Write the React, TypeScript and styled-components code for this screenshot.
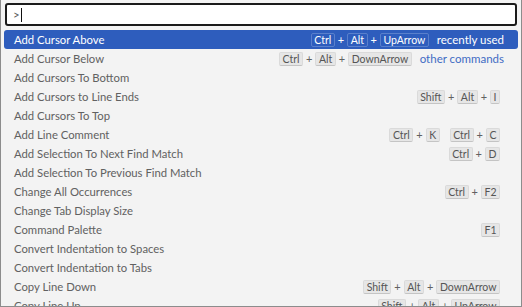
import React from "react";
import styled, { createGlobalStyle } from "styled-components";

const GlobalStyle = createGlobalStyle`
  html, body {
    margin: 0;
    padding: 0;
    background: #f3f3f3;
  }
  * {
    box-sizing: border-box;
  }
`;

type Chord = string[];

interface Command {
  label: string;
  keys?: Chord[];
  hint?: string;
}

const commands: Command[] = [
  { label: "Add Cursor Above", keys: [["Ctrl", "Alt", "UpArrow"]], hint: "recently used" },
  { label: "Add Cursor Below", keys: [["Ctrl", "Alt", "DownArrow"]], hint: "other commands" },
  { label: "Add Cursors To Bottom" },
  { label: "Add Cursors to Line Ends", keys: [["Shift", "Alt", "I"]] },
  { label: "Add Cursors To Top" },
  { label: "Add Line Comment", keys: [["Ctrl", "K"], ["Ctrl", "C"]] },
  { label: "Add Selection To Next Find Match", keys: [["Ctrl", "D"]] },
  { label: "Add Selection To Previous Find Match" },
  { label: "Change All Occurrences", keys: [["Ctrl", "F2"]] },
  { label: "Change Tab Display Size" },
  { label: "Command Palette", keys: [["F1"]] },
  { label: "Convert Indentation to Spaces" },
  { label: "Convert Indentation to Tabs" },
  { label: "Copy Line Down", keys: [["Shift", "Alt", "DownArrow"]] },
  { label: "Copy Line Up", keys: [["Shift", "Alt", "UpArrow"]] },
];

const Frame = styled.div`
  width: 522px;
  height: 307px;
  overflow: hidden;
  background: #f3f3f3;
  border-left: 1px solid #8c8c8c;
  border-right: 1px solid #8c8c8c;
  border-bottom: 1px solid #8c8c8c;
  font-family: Lato, "Open Sans", sans-serif;
  display: flex;
  flex-direction: column;
  padding: 3px 3px 0 3px;
`;

const InputBox = styled.div`
  flex: none;
  height: 23px;
  margin: 0 1px 4px 1px;
  border: 2px solid #1b1b1b;
  border-radius: 3px;
  background: #ffffff;
  display: flex;
  align-items: center;
  padding-left: 6px;
  font-size: 11.5px;
  color: #5a5a5a;
`;

const Caret = styled.span`
  display: inline-block;
  width: 1px;
  height: 14px;
  background: #111;
  margin-left: 1px;
`;

const List = styled.div`
  flex: none;
  display: flex;
  flex-direction: column;
`;

const Row = styled.div<{ $active?: boolean }>`
  height: 19px;
  flex: none;
  display: flex;
  align-items: center;
  padding: 0 14px 0 10px;
  border-radius: 3px;
  font-size: 11.3px;
  color: ${(p) => (p.$active ? "#ffffff" : "#616161")};
  background: ${(p) => (p.$active ? "#2e5dbd" : "transparent")};
`;

const Label = styled.span`
  flex: 1;
  white-space: nowrap;
`;

const Keys = styled.div<{ $tail?: boolean }>`
  display: flex;
  align-items: center;
  gap: 10px;
  margin-right: ${(p) => (p.$tail ? "4px" : "0")};
`;

const ChordGroup = styled.div`
  display: flex;
  align-items: center;
  gap: 3px;
`;

const Keycap = styled.span<{ $active?: boolean }>`
  display: inline-flex;
  align-items: center;
  height: 14px;
  padding: 0 2.5px;
  font-size: 10.5px;
  border-radius: 2px;
  color: ${(p) => (p.$active ? "#ffffff" : "#555555")};
  background: ${(p) => (p.$active ? "#2e5dbd" : "#e6e6e6")};
  border: 1px solid ${(p) => (p.$active ? "#5a80cc" : "#dadada")};
  border-bottom-color: ${(p) => (p.$active ? "#5a80cc" : "#c4c4c4")};
`;

const Plus = styled.span<{ $active?: boolean }>`
  font-size: 11px;
  color: ${(p) => (p.$active ? "#ffffff" : "#616161")};
`;

const Hint = styled.span<{ $active?: boolean }>`
  margin-left: 8px;
  font-size: 11.5px;
  white-space: nowrap;
  color: ${(p) => (p.$active ? "#ffffff" : "#3f6cc4")};
`;

function KeyBinding({ keys, active, tail }: { keys: Chord[]; active: boolean; tail: boolean }) {
  return (
    <Keys $tail={tail}>
      {keys.map((chord, i) => (
        <ChordGroup key={i}>
          {chord.map((k, j) => (
            <React.Fragment key={j}>
              {j > 0 && <Plus $active={active}>+</Plus>}
              <Keycap $active={active}>{k}</Keycap>
            </React.Fragment>
          ))}
        </ChordGroup>
      ))}
    </Keys>
  );
}

export default function App() {
  return (
    <>
      <GlobalStyle />
      <Frame>
        <InputBox>
          &gt;
          <Caret />
        </InputBox>
        <List>
          {commands.map((c, i) => {
            const active = i === 0;
            return (
              <Row key={c.label} $active={active}>
                <Label>{c.label}</Label>
                {c.keys && <KeyBinding keys={c.keys} active={active} tail={!c.hint} />}
                {c.hint && <Hint $active={active}>{c.hint}</Hint>}
              </Row>
            );
          })}
        </List>
      </Frame>
    </>
  );
}
